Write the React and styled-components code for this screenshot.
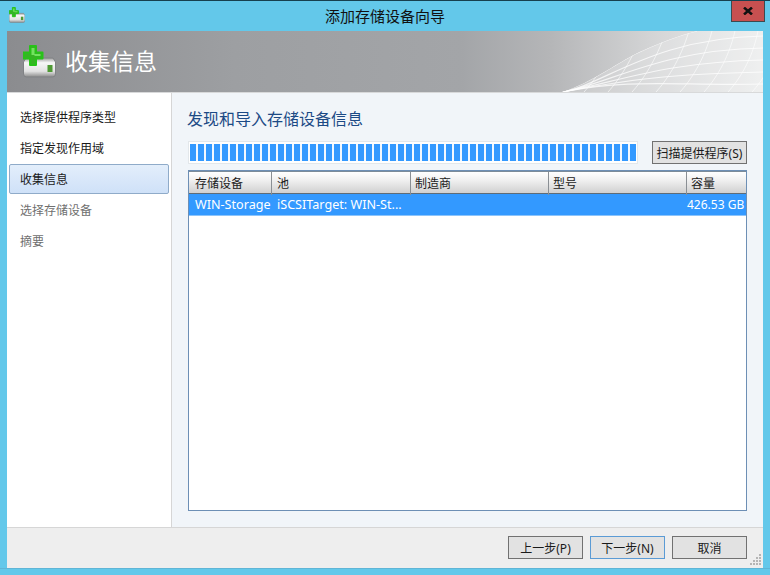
import React from "react";
import styled, { createGlobalStyle } from "styled-components";

const Global = createGlobalStyle`
  html, body { margin: 0; padding: 0; background: #63c8ea; }
  * { box-sizing: border-box; }
`;

const FONT = `"Noto Sans", "Noto Sans CJK SC", sans-serif`;

const Frame = styled.div`
  width: 770px; height: 575px; display: flex; flex-direction: column;
  background: #63c8ea; border-top: 1px solid #17404f; font-family: ${FONT};
  font-size: 12px; color: #1a1a1a; overflow: hidden;
`;
const TitleBar = styled.div`
  height: 30px; flex: none; display: flex; align-items: flex-start; padding-left: 9px; position: relative;
`;
const TitleIconSlot = styled.div`
  width: 16px; height: 17px; margin-top: 6px; flex: none;
`;
const TitleText = styled.div`
  position: absolute; left: 0; right: 0; top: 5px; text-align: center; font-size: 15px; line-height: 20px; color: #111;
`;
const CloseButton = styled.div`
  position: absolute; left: 731px; top: 0; width: 34px; height: 21px; background: #c75050;
  border: 1px solid #3c4a50; border-top: none; display: flex; align-items: center; justify-content: center;
`;
const Client = styled.div`
  margin: 0 7px; width: 756px; flex: 1; display: flex; flex-direction: column; min-height: 0;
`;
const Banner = styled.div`
  height: 62px; flex: none; position: relative; display: flex; align-items: center; padding-left: 16px; gap: 9px;
  background: linear-gradient(90deg, #8b8c8f 0%, #9d9fa2 30%, #a3a5a8 60%, #b5b6b8 72%, #d5d6d7 86%, #ebecec 100%);
  border-bottom: 1px solid #d8d9da; overflow: hidden;
`;
const BannerMesh = styled.svg`
  position: absolute; right: 0; top: 0;
`;
const BannerIcon = styled.svg`
  position: relative; flex: none;
`;
const BannerTitle = styled.div`
  position: relative; font-size: 23px; line-height: 32px; color: #fff; margin-top: -2px;
`;
const Middle = styled.div`
  flex: 1; display: flex; min-height: 0;
`;
const Nav = styled.nav`
  width: 165px; flex: none; background: #fff; border-right: 1px solid #d6d6d6; padding: 9px 2px 0;
  display: flex; flex-direction: column; gap: 1px;
`;
const NavItem = styled.div`
  height: 30px; line-height: 30px; padding-left: 10px; font-size: 12px; border-radius: 2px;
  border: 1px solid ${p => (p.$active ? "#8fabc9" : "transparent")};
  color: ${p => (p.$disabled ? "#6f6f6f" : "#1a1a1a")};
  background: ${p => (p.$active ? "linear-gradient(180deg, #e3eefb 0%, #cfe1f8 100%)" : "transparent")};
`;
const Content = styled.main`
  flex: 1; background: #f1f5f9; padding: 15px 16px 16px; display: flex; flex-direction: column; min-width: 0;
`;
const Heading = styled.h1`
  margin: 0 0 11px -1px; font-weight: 400; font-size: 16px; line-height: 22px; color: #1c4a85;
`;
const ScanRow = styled.div`
  display: flex; justify-content: space-between; align-items: flex-start; margin-bottom: 6px;
`;
const Progress = styled.div`
  width: 450px; height: 23px; background: #fff; border: 1px solid #e3e7ea; padding: 2px 1px;
`;
const ProgressFill = styled.div`
  height: 100%; background: repeating-linear-gradient(90deg, #3399ff 0 6px, #f2f8ff 6px 8px);
`;
const ScanButton = styled.button`
  width: 95px; height: 23px; padding: 0; font: inherit; font-size: 12px; color: #1a1a1a;
  background: #e2e2e2; border: 1px solid #717171; white-space: nowrap;
`;
const Table = styled.div`
  flex: 1; background: #fff; border: 1px solid #6d8fb5; min-height: 0;
`;
const HeaderRow = styled.div`
  display: grid; grid-template-columns: 83px 139px 138px 138px 1fr; height: 23px;
  border-top: 1px solid #7d8c99; border-bottom: 1px solid #5f6c77;
  background: linear-gradient(180deg, #ffffff 0%, #f0f0f0 40%, #d0d0d0 100%);
`;
const HeaderCell = styled.div`
  padding-left: 6px; line-height: 23px; border-right: 1px solid #8a8f94; font-size: 12px; color: #1a1a1a;
  &:nth-child(2) { padding-left: 5px; }
  &:nth-child(n+3) { padding-left: 4px; }
  &:last-child { border-right: none; }
`;
const DataRow = styled.div`
  display: grid; grid-template-columns: 83px 139px 138px 138px 1fr; height: 22px; background: #3399ff; color: #fff;
  border-bottom: 1px solid #8cc4fb;
`;
const DataCell = styled.div`
  padding-left: 6px; line-height: 21px; font-size: 12.6px; white-space: nowrap;
`;
const PoolCell = styled(DataCell)`
  padding-left: 5px;
`;
const CapacityCell = styled(DataCell)`
  padding: 0 3px 0 0; font-size: 12px; text-align: right;
`;
const Footer = styled.footer`
  height: 41px; flex: none; background: #eeeeee; border-top: 1px solid #d6d6d6; position: relative;
  display: flex; justify-content: flex-end; gap: 7px; padding: 8px 16px 0 0;
`;
const FooterButton = styled.button`
  width: 75px; height: 23px; padding: 0; font: inherit; font-size: 12px; color: #1a1a1a;
  background: #e2e2e2; border: 1px solid ${p => (p.$default ? "#5b9bd5" : "#717171")};
`;
const Grip = styled.svg`
  position: absolute; right: 1px; bottom: 2px;
`;
const BottomBar = styled.div`
  height: 7px; flex: none; border-top: 1px solid #5fb5d6;
`;

const DriveIcon = ({ as: C = "svg", size = 16, ...rest }) => (
  <C width={size} height={size} viewBox="0 0 33 33" {...rest}>
    <defs>
      <linearGradient id="dv" x1="0" y1="0" x2="0" y2="1">
        <stop offset="0" stopColor="#9c9c9c" />
        <stop offset="0.25" stopColor="#f7f7f7" />
        <stop offset="0.7" stopColor="#e2e2e2" />
        <stop offset="1" stopColor="#8c8c8c" />
      </linearGradient>
    </defs>
    <path d="M3 13 h27 l2.5 4 v12 a3 3 0 0 1-3 3 h-26 a3 3 0 0 1-3-3 v-12z" fill="url(#dv)" stroke="#808285" strokeWidth="1" />
    <rect x="24.5" y="20" width="5" height="7" fill="#4f9a34" />
    <path d="M7 1 h6 v6.5 h6.5 v6 h-6.5 v6.5 h-6 v-6.5 h-6.5 v-6 h6.5z" fill="#36b424" stroke="#27c318" strokeWidth="2" strokeLinejoin="round" />
    <path d="M8.5 3 h3 v6 h6 v2 h-6 v-1 h-3z" fill="#72e35f" />
  </C>
);

const Mesh = () => {
  const ends = [5, 17, 29, 41, 53];
  const h = ends.map((y, i) => `M0 61 C ${40 + i * 8} ${55 - i * 2}, ${90 + i * 6} ${y + 2}, 201 ${y}`);
  const v = [];
  for (let i = 0; i < 9; i++) {
    const bx = 22 + i * 24;
    v.push(`M${bx} 61 C ${bx + 10} 50, ${bx + 24} 30, ${bx + 36 - i} 0`);
  }
  const envelope = "M0 61 C 30 52, 60 28, 82 19 C 100 11, 118 4, 135 0";
  return (
    <BannerMesh width="201" height="61" viewBox="0 0 201 61">
      <defs>
        <clipPath id="env"><path d={`${envelope} L201 0 L201 61z`} /></clipPath>
      </defs>
      <path d={`${envelope} L201 0 L201 61z`} fill="#fff" opacity="0.2" />
      <g clipPath="url(#env)" fill="none" stroke="#fff">
        {h.map((d, i) => <path key={i} d={d} strokeWidth="1.2" opacity="0.75" />)}
        {v.map((d, i) => <path key={i} d={d} strokeWidth="1" opacity="0.6" />)}
        <path d={envelope} strokeWidth="1" opacity="0.7" />
      </g>
    </BannerMesh>
  );
};

const cols = ["存储设备", "池", "制造商", "型号", "容量"];
const navItems = [
  { label: "选择提供程序类型" },
  { label: "指定发现作用域" },
  { label: "收集信息", active: true },
  { label: "选择存储设备", disabled: true },
  { label: "摘要", disabled: true },
];

export default function App() {
  return (
    <Frame>
      <Global />
      <TitleBar>
        <TitleIconSlot><DriveIcon size={16} /></TitleIconSlot>
        <TitleText>添加存储设备向导</TitleText>
        <CloseButton>
          <svg width="10" height="8" viewBox="0 0 10 8">
            <path d="M1 0.6 L9 7.4 M9 0.6 L1 7.4" stroke="#111" strokeWidth="2.6" />
          </svg>
        </CloseButton>
      </TitleBar>
      <Client>
        <Banner>
          <Mesh />
          <DriveIcon as={BannerIcon} size={33} />
          <BannerTitle>收集信息</BannerTitle>
        </Banner>
        <Middle>
          <Nav>
            {navItems.map(n => (
              <NavItem key={n.label} $active={n.active} $disabled={n.disabled}>{n.label}</NavItem>
            ))}
          </Nav>
          <Content>
            <Heading>发现和导入存储设备信息</Heading>
            <ScanRow>
              <Progress><ProgressFill /></Progress>
              <ScanButton>扫描提供程序(S)</ScanButton>
            </ScanRow>
            <Table>
              <HeaderRow>
                {cols.map(c => <HeaderCell key={c}>{c}</HeaderCell>)}
              </HeaderRow>
              <DataRow>
                <DataCell>WIN-Storage</DataCell>
                <PoolCell>iSCSITarget: WIN-St...</PoolCell>
                <DataCell />
                <DataCell />
                <CapacityCell>426.53 GB</CapacityCell>
              </DataRow>
            </Table>
          </Content>
        </Middle>
        <Footer>
          <FooterButton>上一步(P)</FooterButton>
          <FooterButton $default>下一步(N)</FooterButton>
          <FooterButton>取消</FooterButton>
          <Grip width="12" height="12" viewBox="0 0 12 12">
            {[[9,0],[6,3],[9,3],[3,6],[6,6],[9,6],[0,9],[3,9],[6,9],[9,9]].map(([x, y]) => (
              <rect key={`${x}-${y}`} x={x} y={y} width="2" height="2" fill="#b5b5b5" />
            ))}
          </Grip>
        </Footer>
      </Client>
      <BottomBar />
    </Frame>
  );
}
